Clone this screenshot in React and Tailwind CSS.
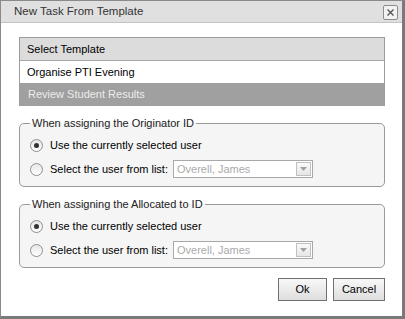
import { useState } from "react";

const font = { fontFamily: '"Liberation Sans", Arial, sans-serif' };

const Radio = ({ checked, onClick }) => (
    <button
        type="button"
        onClick={onClick}
        className="w-[13px] h-[13px] rounded-full border border-[#8f8f8f] bg-gradient-to-b from-[#e6e6e6] to-[#ffffff] flex items-center justify-center shrink-0"
    >
        {checked && <span className="w-[5px] h-[5px] rounded-full bg-[#333]" />}
    </button>
);

const UserPicker = ({ label }) => {
    const [choice, setChoice] = useState(0);

    return (
        <fieldset className="border border-[#9a9a9a] rounded-[5px] bg-[#f5f5f5] pl-[10px] pr-[10px] pt-[6px] pb-[8px]">
            <legend className="px-[2px] text-[11px] leading-[13px] text-[#222]">{label}</legend>

            <div className="flex items-center h-[18px] gap-[7px]">
                <Radio checked={choice === 0} onClick={() => setChoice(0)} />
                <span className="text-[11px] text-black">Use the currently selected user</span>
            </div>

            <div className="flex items-center h-[18px] gap-[7px] mt-[6px]">
                <Radio checked={choice === 1} onClick={() => setChoice(1)} />
                <span className="text-[11px] text-black">Select the user from list:</span>
                <div className="ml-[-2px] w-[140px] h-[18px] border border-[#a8a8a8] bg-white flex items-center justify-between pl-[3px] pr-[1px]">
                    <span className="text-[11px] text-[#aaaaaa]">Overell, James</span>
                    <span className="w-[15px] h-[14px] border border-[#c0c0c0] bg-gradient-to-b from-[#fafafa] to-[#e6e6e6] flex items-center justify-center">
                        <svg width="7" height="4" viewBox="0 0 7 4">
                            <path d="M0 0h7L3.5 4z" fill="#a0a0a0" />
                        </svg>
                    </span>
                </div>
            </div>
        </fieldset>
    );
};

const App = () => {
    const [selected, setSelected] = useState(0);
    const templates = ["Organise PTI Evening", "Review Student Results"];

    return (
        <div style={font} className="w-[405px] h-[319px] bg-white border-l border-t border-[#8a8a8a] border-r-[3px] border-b-[3px] border-r-[#7a7a7a] border-b-[#7a7a7a] flex flex-col">
            {/* title bar */}
            <div className="h-[22px] bg-[#e0e0e0] border-b border-[#c4c4c4] flex items-center justify-between pl-[13px] pr-[4px] shrink-0">
                <span className="text-[11.5px] text-[#333]">New Task From Template</span>
                <button className="w-[15px] h-[15px] mt-[2px] border border-[#8c8c8c] rounded-[2px] bg-[#f2f2f2] flex items-center justify-center">
                    <svg width="7" height="7" viewBox="0 0 7 7">
                        <path d="M0.5 0.5l6 6M6.5 0.5l-6 6" stroke="#555" strokeWidth="1.4" />
                    </svg>
                </button>
            </div>

            <div className="flex-1 pl-[18px] pr-[17px] pt-[14px] flex flex-col">
                {/* template list */}
                <div className="border border-[#9c9c9c]">
                    <div className="h-[23px] bg-[#dcdcdc] border-b border-[#a8a8a8] flex items-center px-[7px] text-[11px] text-black">
                        Select Template
                    </div>
                    {templates.map((t, i) => (
                        <div
                            key={i}
                            onClick={() => setSelected(i)}
                            className={
                                i === 1
                                    ? "h-[22px] bg-[#a0a0a0] flex items-center px-[8px] text-[11px] text-[#ececec]"
                                    : "h-[22px] bg-white flex items-center px-[7px] text-[11px] text-black"
                            }
                        >
                            {t}
                        </div>
                    ))}
                </div>

                <div className="mt-[11px]">
                    <UserPicker label="When assigning the Originator ID" />
                </div>

                <div className="mt-[11px]">
                    <UserPicker label="When assigning the Allocated to ID" />
                </div>

                <div className="flex justify-end gap-[6px] mt-[10px]">
                    <button className="w-[49px] h-[23px] border border-[#707070] bg-gradient-to-b from-[#f8f8f8] to-[#dedede] text-[11px] text-black">
                        Ok
                    </button>
                    <button className="w-[52px] h-[23px] border border-[#707070] bg-gradient-to-b from-[#f8f8f8] to-[#dedede] text-[11px] text-black">
                        Cancel
                    </button>
                </div>
            </div>
        </div>
    );
};

export default App;
